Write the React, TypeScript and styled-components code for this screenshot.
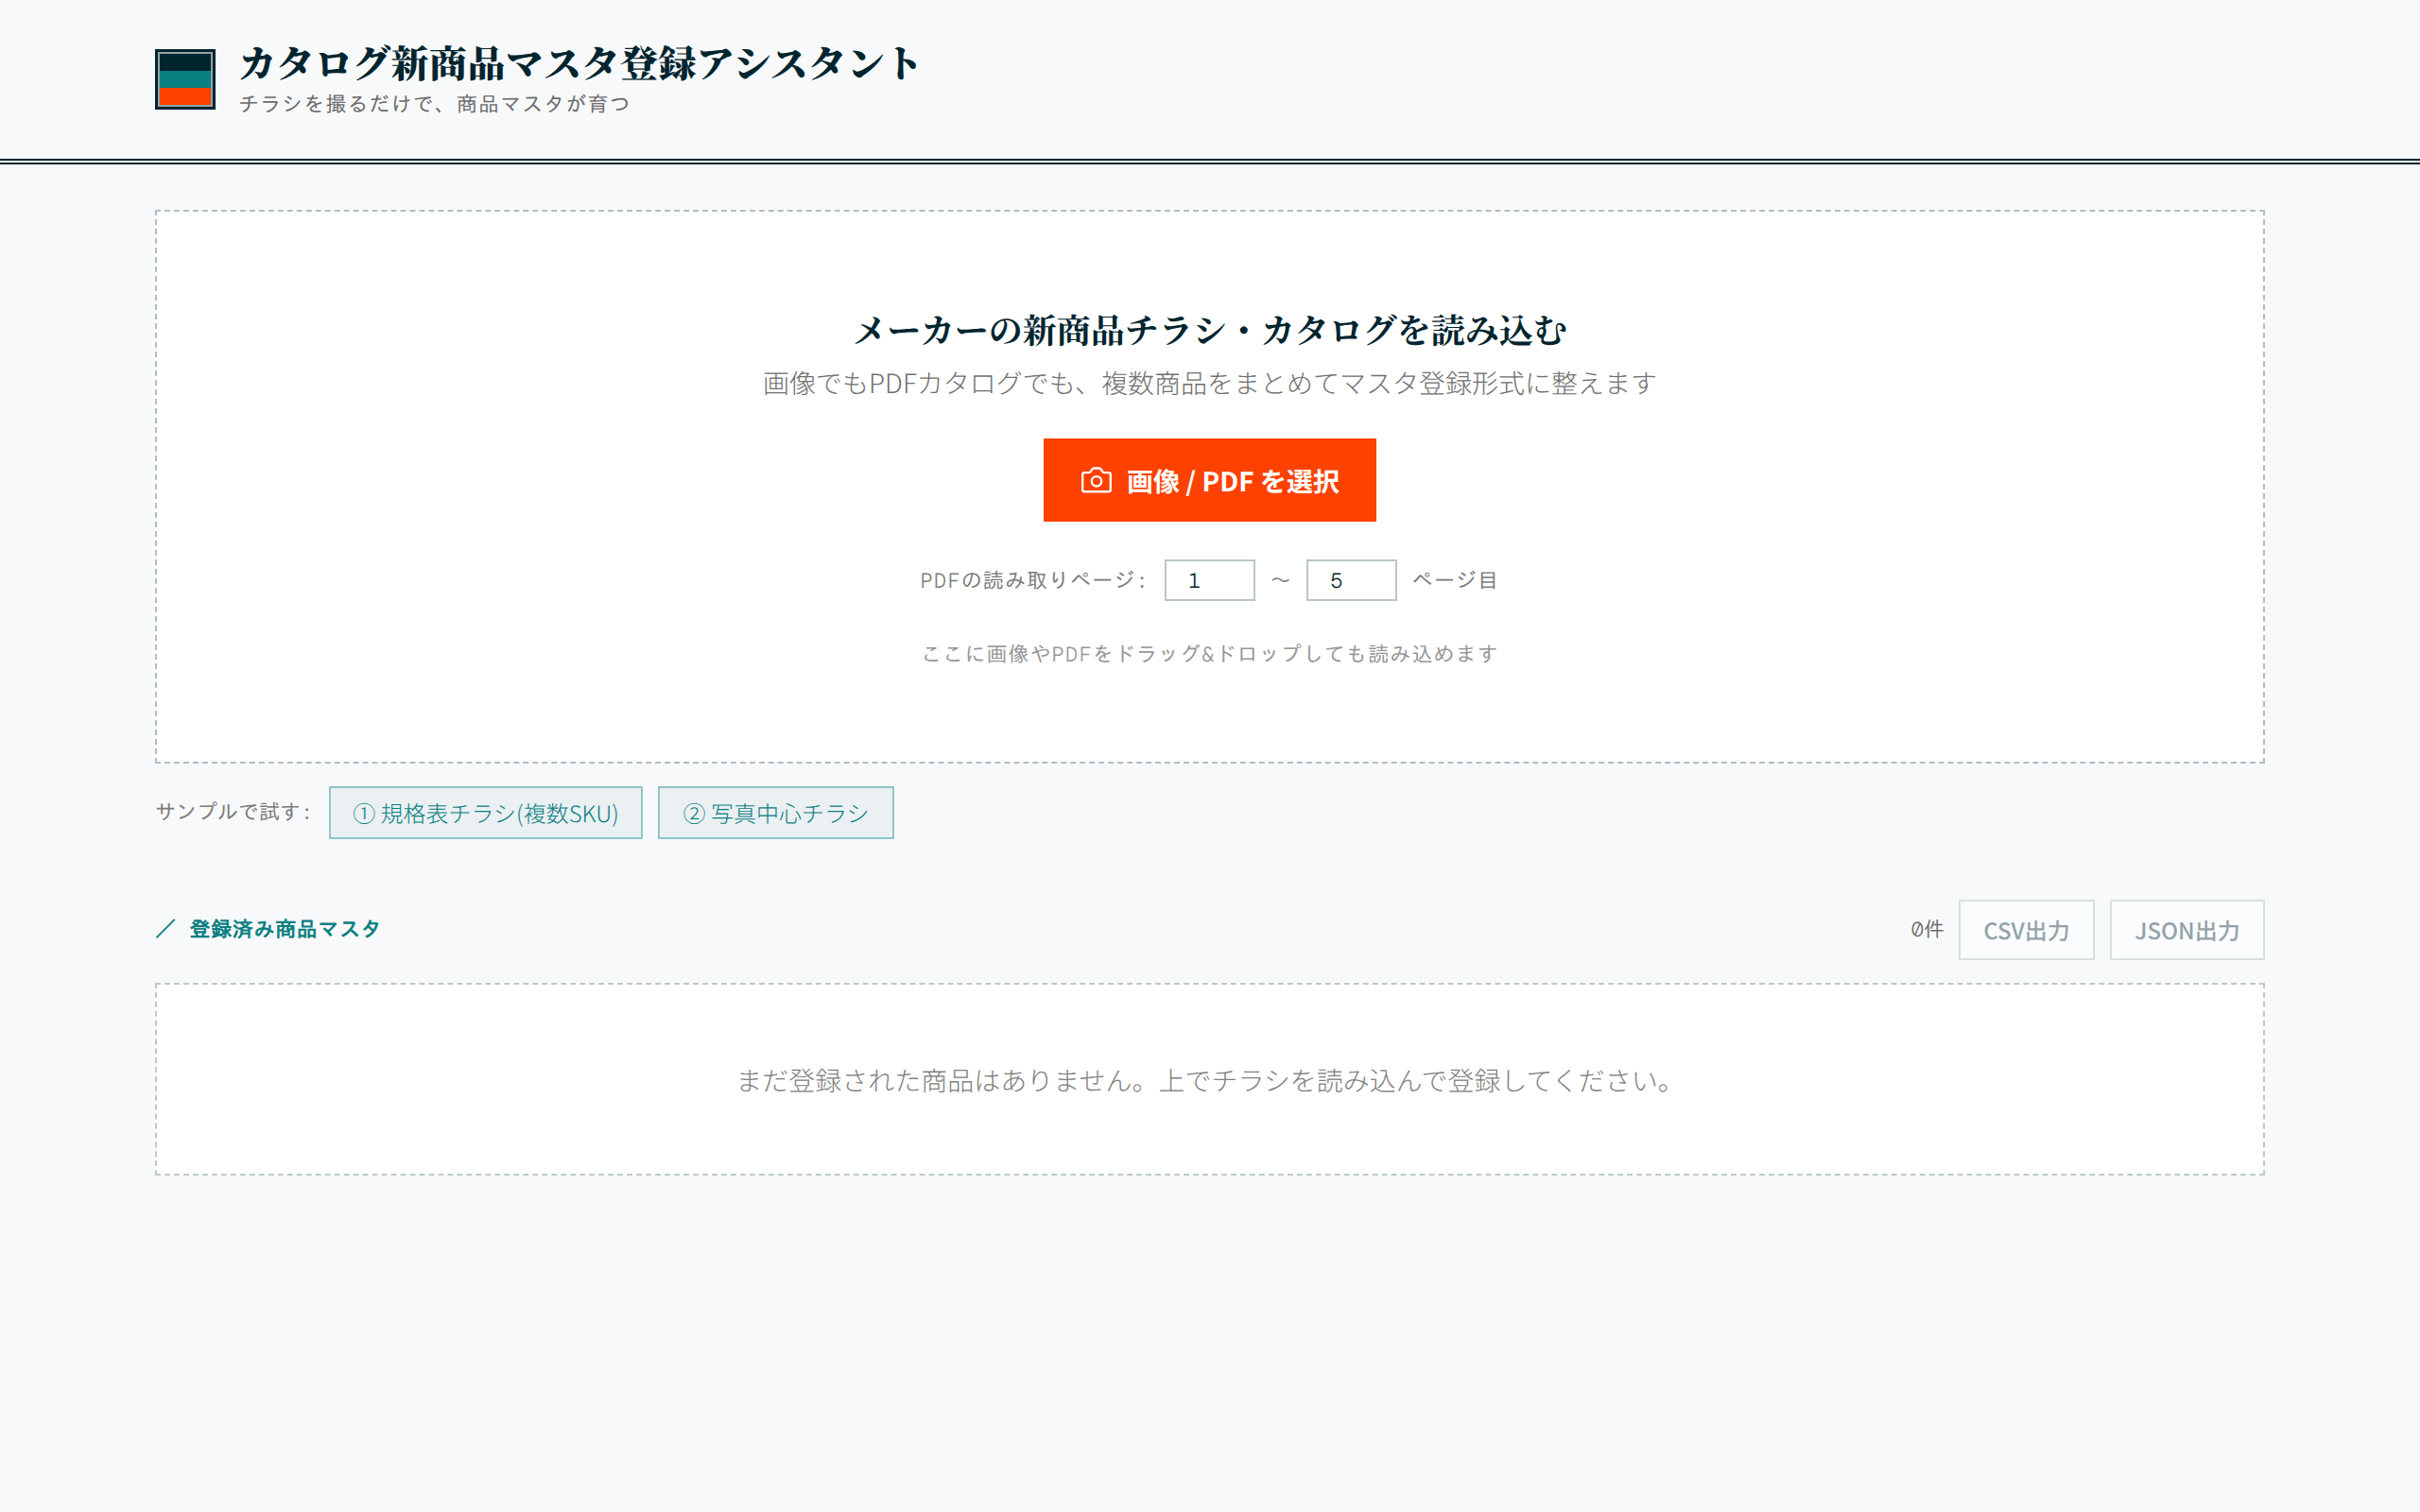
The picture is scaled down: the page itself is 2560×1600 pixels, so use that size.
import React from "react";
import styled, { createGlobalStyle } from "styled-components";

const ink = "#00252f";
const teal = "#0b8082";
const orange = "#fc4100";
const mono = `"DM Mono", IPAGothic, "Noto Sans CJK JP", monospace`;
const sans = `"Noto Sans JP", "Noto Sans CJK JP", sans-serif`;
const serif = `"Noto Serif JP", "Noto Serif CJK JP", serif`;

const GlobalStyle = createGlobalStyle`
  * { box-sizing: border-box; }
  body {
    margin: 0;
    background: #f8f9fb;
    color: ${ink};
    font-family: ${sans};
    font-weight: 300;
    font-size: 28px;
    text-rendering: geometricPrecision;
  }
  h1, h2, h3, p { margin: 0; }
  button, input { font: inherit; margin: 0; border-radius: 0; text-rendering: inherit; }
`;

const Page = styled.div`
  min-height: 1600px;
`;

const Container = styled.div`
  width: 2360px;
  margin: 0 auto;
  padding: 0 64px;
`;

const Header = styled.header`
  height: 174px;
  border-bottom: 6px double ${ink};
`;

const Brand = styled(Container)`
  height: 168px;
  display: flex;
  align-items: center;
  gap: 24px;
`;

const Logo = styled.div`
  width: 64px;
  height: 64px;
  padding: 3px;
  background: ${ink};
`;

const Stripes = styled.div`
  height: 58px;
  border: 2px solid #94a3a8;
  display: grid;
  grid-template-rows: repeat(3, 1fr);
`;

const Stripe = styled.div<{ $color: string }>`
  background: ${(p) => p.$color};
`;

const BrandText = styled.div`
  display: flex;
  flex-direction: column;
`;

const Title = styled.h1`
  padding-top: 1px;
  font-family: ${serif};
  font-weight: 900;
  font-size: 40px;
  line-height: 50px;
  letter-spacing: 0.01em;
`;

const Tagline = styled.p`
  padding-top: 1px;
  margin-bottom: -2px;
  font-family: ${mono};
  font-size: 22px;
  line-height: 38px;
  letter-spacing: 0.05em;
  color: #6b6b6b;
`;

const Main = styled(Container).attrs({ as: "main" })`
  padding-top: 48px;
`;

const DropZone = styled.section`
  height: 586px;
  padding-top: 97px;
  border: 2px dashed #b0bec2;
  background: #fff;
  display: flex;
  flex-direction: column;
  align-items: center;
`;

const DropTitle = styled.h2`
  font-family: ${serif};
  font-weight: 700;
  font-size: 36px;
  line-height: 56px;
`;

const DropLead = styled.p`
  line-height: 48px;
  margin-top: 4px;
  color: #707070;
`;

const PickButton = styled.button`
  width: 352px;
  height: 88px;
  margin-top: 35px;
  padding: 0 0 0 40px;
  border: 0;
  background: ${orange};
  color: #fff;
  font-weight: 700;
  display: flex;
  align-items: center;
  gap: 16px;
  white-space: nowrap;
`;

const PickLabel = styled.span`
  padding-top: 2px;
`;

const PageRange = styled.div`
  height: 44px;
  margin-top: 40px;
  display: flex;
  align-items: center;
  gap: 16px;
  font-family: ${mono};
  font-size: 22px;
  letter-spacing: 0.05em;
  color: #7c7c7c;
`;

const Tilde = styled.span`
  width: 22px;
`;

const PageInput = styled.input`
  width: 96px;
  height: 44px;
  padding: 0 32px 0 0;
  border: 2px solid #b9c6c9;
  background: #fff;
  color: ${ink};
  text-align: center;
`;

const DropHint = styled.p`
  margin-top: 39px;
  font-family: ${mono};
  font-size: 22px;
  line-height: 36px;
  letter-spacing: 0.05em;
  color: #969696;
`;

const Samples = styled.div`
  margin-top: 24px;
  display: flex;
  align-items: center;
  gap: 16px;
`;

const SampleLabel = styled.span`
  width: 168px;
  padding-bottom: 2px;
  white-space: nowrap;
  font-family: ${mono};
  font-size: 22px;
  color: #7c7c7c;
`;

const SampleButton = styled.button<{ $width: number }>`
  width: ${(p) => p.$width}px;
  height: 56px;
  padding: 0 0 2px;
  border: 2px solid #8fc5c7;
  background: #ebf0f3;
  color: ${teal};
  font-size: 24px;
  white-space: nowrap;
`;

const MasterHead = styled.div`
  margin-top: 64px;
  height: 64px;
  display: flex;
  align-items: center;
  gap: 16px;
`;

const MasterTitle = styled.h3`
  flex: 1;
  padding-bottom: 2px;
  font-family: ${mono};
  font-weight: 700;
  font-size: 22px;
  letter-spacing: 0.03em;
  color: ${teal};
`;

const Count = styled.span`
  margin-right: -1px;
  padding-bottom: 2px;
  font-family: ${mono};
  font-size: 22px;
  color: #6e6e6e;
`;

const ExportButton = styled.button<{ $width: number }>`
  width: ${(p) => p.$width}px;
  height: 64px;
  padding: 0 0 2px;
  border: 2px solid #d8e0e1;
  background: #fbfcfd;
  color: #93a3a9;
  font-size: 24px;
  font-weight: 500;
  white-space: nowrap;
`;

const EmptyState = styled.div`
  margin-top: 24px;
  height: 204px;
  padding-top: 2px;
  border: 2px dashed #bcc8cb;
  background: #fff;
  color: #808080;
  display: flex;
  align-items: center;
  justify-content: center;
`;

function CameraIcon() {
  return (
    <svg width="32" height="32" viewBox="0 0 24 24" fill="none" stroke="currentColor" strokeWidth="1.75" strokeLinejoin="round">
      <path d="M2.6 6.1h3.2c.7 0 1.2-.3 1.6-.9l1.1-1.8c.3-.5.7-.8 1.3-.8h4.4c.6 0 1 .3 1.3.8l1.1 1.8c.4.6.9.9 1.6.9h3.2c1 0 1.7.7 1.7 1.6v11.9c0 .9-.7 1.6-1.7 1.6H2.6c-1 0-1.7-.7-1.7-1.6V7.7c0-.9.7-1.6 1.7-1.6z" />
      <circle cx="12" cy="13" r="3.9" />
    </svg>
  );
}

export default function App() {
  return (
    <Page lang="ja">
      <GlobalStyle />
      <Header>
        <Brand>
          <Logo>
            <Stripes>
              <Stripe $color={ink} />
              <Stripe $color={teal} />
              <Stripe $color={orange} />
            </Stripes>
          </Logo>
          <BrandText>
            <Title>カタログ新商品マスタ登録アシスタント</Title>
            <Tagline>チラシを撮るだけで、商品マスタが育つ</Tagline>
          </BrandText>
        </Brand>
      </Header>
      <Main>
        <DropZone>
          <DropTitle>メーカーの新商品チラシ・カタログを読み込む</DropTitle>
          <DropLead>画像でもPDFカタログでも、複数商品をまとめてマスタ登録形式に整えます</DropLead>
          <PickButton>
            <CameraIcon />
            <PickLabel>画像 / PDF を選択</PickLabel>
          </PickButton>
          <PageRange>
            <span>PDFの読み取りページ:</span>
            <PageInput defaultValue="1" />
            <Tilde>〜</Tilde>
            <PageInput defaultValue="5" />
            <span>ページ目</span>
          </PageRange>
          <DropHint>ここに画像やPDFをドラッグ&ドロップしても読み込めます</DropHint>
        </DropZone>
        <Samples>
          <SampleLabel>サンプルで試す:</SampleLabel>
          <SampleButton $width={332}>① 規格表チラシ(複数SKU)</SampleButton>
          <SampleButton $width={250}>② 写真中心チラシ</SampleButton>
        </Samples>
        <MasterHead>
          <MasterTitle>／ 登録済み商品マスタ</MasterTitle>
          <Count>0件</Count>
          <ExportButton $width={144}>CSV出力</ExportButton>
          <ExportButton $width={164}>JSON出力</ExportButton>
        </MasterHead>
        <EmptyState>まだ登録された商品はありません。上でチラシを読み込んで登録してください。</EmptyState>
      </Main>
    </Page>
  );
}
